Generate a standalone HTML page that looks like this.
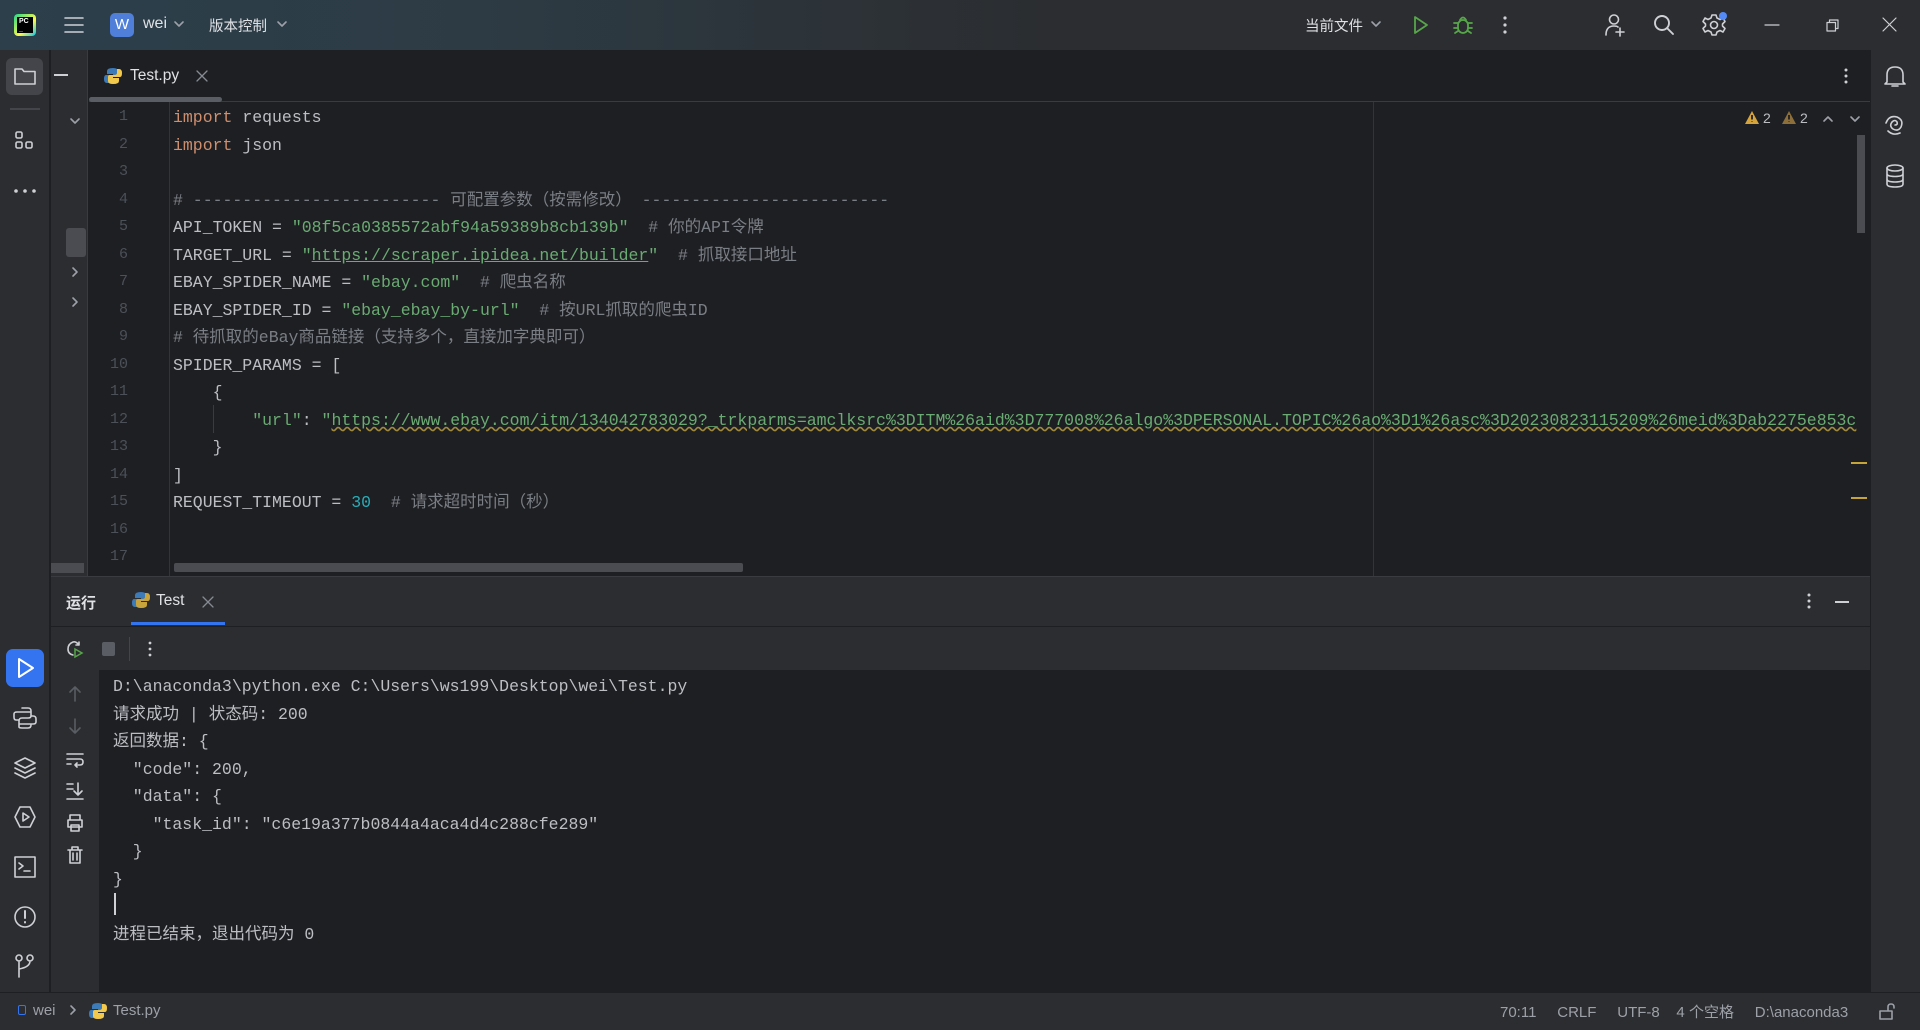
<!DOCTYPE html>
<html><head><meta charset="utf-8"><style>
*{margin:0;padding:0;box-sizing:border-box}
body{width:1920px;height:1030px;overflow:hidden;background:#1e1f22;font-family:"Liberation Sans","Noto Sans CJK SC",sans-serif;color:#bcbec4;position:relative}
.a{position:absolute}
.mono{font-family:"Liberation Mono","Noto Sans CJK SC",monospace;font-size:16.5px;white-space:pre;line-height:20px}
.k{color:#cf8e6d}.s{color:#6aab73}.c{color:#7a7e85}.n{color:#2aacb8}.u{text-decoration:underline}
.ln{position:absolute;width:40px;text-align:right;left:88px;color:#4b5059;font-family:"Liberation Mono",monospace;font-size:15px}
svg{position:absolute;overflow:visible}
.ic{fill:none;stroke:#ced0d6;stroke-width:1.6;stroke-linecap:round;stroke-linejoin:round}
</style></head><body>
<!-- title bar -->
<div class="a" style="left:0;top:0;width:1920px;height:50px;background:linear-gradient(90deg,#2c3f4b 0%,#2d3b44 25%,#2b2d30 55%)"></div>
<div class="a" style="left:14px;top:14px;width:22px;height:22px;border-radius:4px;background:linear-gradient(135deg,#21d789,#fcf84a 60%,#07c3f2)"></div>
<div class="a" style="left:17px;top:17px;width:16px;height:16px;background:#000;color:#fff;font-size:7px;font-weight:bold;padding:1px 2px;line-height:8px">PC<br>_</div>
<svg style="left:64px;top:16px" width="20" height="18"><path class="ic" d="M1 2H19M1 9H19M1 16H19"/></svg>
<div class="a" style="left:110px;top:13px;width:24px;height:24px;border-radius:5px;background:#4f7fd9;color:#fff;font-size:15px;text-align:center;line-height:24px">W</div>
<div class="a" style="left:143px;top:15px;font-size:16px;color:#dfe1e5">wei</div>
<svg style="left:174px;top:21px" width="10" height="6"><path class="ic" d="M1 1L5 5L9 1" style="stroke:#9da0a8"/></svg>
<div class="a" style="left:209px;top:15px;font-size:14.5px;color:#dfe1e5">版本控制</div>
<svg style="left:277px;top:21px" width="10" height="6"><path class="ic" d="M1 1L5 5L9 1" style="stroke:#9da0a8"/></svg>
<div class="a" style="left:1305px;top:15px;font-size:14.5px;color:#dfe1e5">当前文件</div>
<svg style="left:1371px;top:21px" width="10" height="6"><path class="ic" d="M1 1L5 5L9 1" style="stroke:#9da0a8"/></svg>
<svg style="left:1413px;top:15px" width="16" height="20"><path class="ic" d="M2 2L14 10L2 18Z" style="stroke:#57a64a;stroke-width:1.8"/></svg>
<svg style="left:1453px;top:14px" width="20" height="22"><g class="ic" style="stroke:#57a64a;stroke-width:1.8"><rect x="5" y="6" width="10" height="13" rx="5"/><path d="M7 6Q10 1 13 6M1 9H5M15 9H19M1 14H5M15 14H19M2 19L5 17M18 19L15 17"/></g></svg>
<svg style="left:1502px;top:16px" width="6" height="18"><g fill="#ced0d6"><circle cx="3" cy="2" r="1.6"/><circle cx="3" cy="9" r="1.6"/><circle cx="3" cy="16" r="1.6"/></g></svg>
<svg style="left:1604px;top:13px" width="22" height="24"><path class="ic" d="M10 2a4.5 4.5 0 1 1 0 9a4.5 4.5 0 1 1 0-9M2 22Q2 13 10 13Q13 13 14 14M16 15V23M12 19H20"/></svg>
<svg style="left:1653px;top:14px" width="22" height="22"><path class="ic" d="M9 2a7 7 0 1 1 0 14a7 7 0 1 1 0-14M14 14L20 20" style="stroke-width:1.9"/></svg>
<svg style="left:1702px;top:13px" width="24" height="24"><path class="ic" d="M10 2H14L15 5L18 6.5L21 5L23 8.5L20.5 11V13L23 15.5L21 19L18 17.5L15 19L14 22H10L9 19L6 17.5L3 19L1 15.5L3.5 13V11L1 8.5L3 5L6 6.5L9 5Z"/><circle class="ic" cx="12" cy="12" r="3.5"/><circle cx="21" cy="3" r="4" fill="#548af7"/></svg>
<svg style="left:1765px;top:24px" width="14" height="2"><path class="ic" d="M0 1H14" style="stroke-width:1.2"/></svg>
<svg style="left:1826px;top:19px" width="13" height="13"><path class="ic" d="M1 3.5H9.5V12H1ZM3.5 3.5V1H12V9.5H9.5" style="stroke-width:1.2"/></svg>
<svg style="left:1883px;top:18px" width="13" height="13"><path class="ic" d="M0 0L13 13M13 0L0 13" style="stroke-width:1.2"/></svg>

<!-- left stripe -->
<div class="a" style="left:0;top:50px;width:50px;height:942px;background:#2b2d30;border-right:1px solid #1e1f22"></div>
<div class="a" style="left:6px;top:58px;width:37px;height:37px;border-radius:6px;background:#43454a"></div>
<svg style="left:14px;top:67px" width="22" height="18"><path class="ic" d="M1 2H8L10 4.5H21V17H1Z"/></svg>
<div class="a" style="left:10px;top:108px;width:30px;height:2px;background:#43454a"></div>
<svg style="left:15px;top:131px" width="20" height="20"><g class="ic"><rect x="1" y="1" width="6" height="6" rx="1.5"/><rect x="1" y="11" width="6" height="6" rx="1.5"/><rect x="11" y="11" width="6" height="6" rx="1.5"/></g></svg>
<svg style="left:14px;top:189px" width="22" height="4"><g fill="#ced0d6"><circle cx="2" cy="2" r="1.8"/><circle cx="11" cy="2" r="1.8"/><circle cx="20" cy="2" r="1.8"/></g></svg>
<div class="a" style="left:6px;top:649px;width:38px;height:38px;border-radius:7px;background:#3574f0"></div>
<svg style="left:17px;top:657px" width="18" height="22"><path class="ic" d="M2 2L16 11L2 20Z" style="stroke:#fff;stroke-width:2"/></svg>
<svg style="left:13px;top:706px" width="24" height="24"><path class="ic" d="M9 2H15Q18 2 18 5V10Q18 12 15 12H9Q6 12 6 15V21Q6 22 9 22H15Q18 22 18 19M6 14H3Q1 14 1 11V8Q1 6 4 6H18M18 10H20Q23 10 23 13V16Q23 18 20 18H6"/></svg>
<svg style="left:13px;top:756px" width="24" height="24"><path class="ic" d="M12 2L22 7L12 12L2 7ZM2 12L12 17L22 12M2 17L12 22L22 17"/></svg>
<svg style="left:13px;top:805px" width="24" height="24"><path class="ic" d="M7 2H17L22 12L17 22H7L2 12ZM10 8L16 12L10 16Z"/></svg>
<svg style="left:13px;top:855px" width="24" height="24"><path class="ic" d="M2 2H22V22H2ZM6 8L10 11L6 14M11 16H17"/></svg>
<svg style="left:13px;top:905px" width="24" height="24"><circle class="ic" cx="12" cy="12" r="10"/><path class="ic" d="M12 6V13M12 17V17.5" style="stroke-width:2"/></svg>
<svg style="left:14px;top:954px" width="22" height="24"><path class="ic" d="M5 1a3 3 0 1 1 0 6a3 3 0 1 1 0-6M16 1a3 3 0 1 1 0 6a3 3 0 1 1 0-6M5 7V23M16 7Q16 13 5 15"/></svg>

<!-- project collapsed stripe -->
<div class="a" style="left:51px;top:50px;width:37px;height:526px;background:#2b2d30;border-right:1px solid #393b40"></div>
<div class="a" style="left:54px;top:74px;width:14px;height:2px;background:#ced0d6"></div>
<svg style="left:70px;top:118px" width="10" height="6"><path class="ic" d="M1 1L5 5L9 1" style="stroke:#9da0a8"/></svg>
<div class="a" style="left:66px;top:228px;width:20px;height:29px;background:#4a4c51;border-radius:3px"></div>
<svg style="left:72px;top:267px" width="6" height="10"><path class="ic" d="M1 1L5 5L1 9" style="stroke:#9da0a8"/></svg>
<svg style="left:72px;top:297px" width="6" height="10"><path class="ic" d="M1 1L5 5L1 9" style="stroke:#9da0a8"/></svg>
<div class="a" style="left:51px;top:563px;width:33px;height:10px;background:#4a4c51"></div>

<!-- editor tabs -->
<div class="a" style="left:89px;top:101px;width:1781px;height:1px;background:#393b40"></div>
<div class="a" style="left:89px;top:97px;width:133px;height:5px;background:#5a5d63;border-radius:3px"></div>
<svg style="left:104px;top:67px" width="18" height="18"><path d="M9 1Q3 1 3 4V7H9V8H2Q0 8 0 12Q0 16 3 16H5V12Q5 10 8 10H12Q14 10 14 8V4Q14 1 9 1Z" fill="#3d7ab8"/><path d="M9 17Q15 17 15 14V11H9V10H16Q18 10 18 6Q18 2 15 2H13V6Q13 8 10 8H6Q4 8 4 10V14Q4 17 9 17Z" fill="#f2c94c"/></svg>
<div class="a" style="left:130px;top:67px;font-size:15.5px;color:#dfe1e5">Test.py</div>
<svg style="left:197px;top:71px" width="10" height="10"><path class="ic" d="M0 0L10 10M10 0L0 10" style="stroke:#868a91;stroke-width:1.3"/></svg>
<svg style="left:1843px;top:68px" width="6" height="16"><g fill="#ced0d6"><circle cx="3" cy="2" r="1.5"/><circle cx="3" cy="8" r="1.5"/><circle cx="3" cy="14" r="1.5"/></g></svg>

<!-- editor code -->
<div class="a" style="left:169px;top:102px;width:1px;height:474px;background:#313438"></div>
<div class="a" style="left:1373px;top:102px;width:1px;height:474px;background:#313438"></div>
<div class="a" style="left:213px;top:405px;width:1px;height:28px;background:#393b40"></div>
<div class="a" style="left:0;top:1px">
<div class="ln" style="top:107px">1</div><div class="ln" style="top:135px">2</div><div class="ln" style="top:162px">3</div><div class="ln" style="top:190px">4</div><div class="ln" style="top:217px">5</div><div class="ln" style="top:245px">6</div><div class="ln" style="top:272px">7</div><div class="ln" style="top:300px">8</div><div class="ln" style="top:327px">9</div><div class="ln" style="top:355px">10</div><div class="ln" style="top:382px">11</div><div class="ln" style="top:410px">12</div><div class="ln" style="top:437px">13</div><div class="ln" style="top:465px">14</div><div class="ln" style="top:492px">15</div><div class="ln" style="top:520px">16</div><div class="ln" style="top:547px">17</div>
</div>
<div class="a" style="left:173px;top:1px;width:1697px;height:575px;overflow:hidden">
<div class="a mono" style="top:107px"><span class="k">import</span> requests</div>
<div class="a mono" style="top:135px"><span class="k">import</span> json</div>
<div class="a mono c" style="top:190px"># ------------------------- 可配置参数（按需修改） -------------------------</div>
<div class="a mono" style="top:217px">API_TOKEN = <span class="s">"08f5ca0385572abf94a59389b8cb139b"</span>  <span class="c"># 你的API令牌</span></div>
<div class="a mono" style="top:245px">TARGET_URL = <span class="s">"<span class="u">https://scraper.ipidea.net/builder</span>"</span>  <span class="c"># 抓取接口地址</span></div>
<div class="a mono" style="top:272px">EBAY_SPIDER_NAME = <span class="s">"ebay.com"</span>  <span class="c"># 爬虫名称</span></div>
<div class="a mono" style="top:300px">EBAY_SPIDER_ID = <span class="s">"ebay_ebay_by-url"</span>  <span class="c"># 按URL抓取的爬虫ID</span></div>
<div class="a mono c" style="top:327px"># 待抓取的eBay商品链接（支持多个，直接加字典即可）</div>
<div class="a mono" style="top:355px">SPIDER_PARAMS = [</div>
<div class="a mono" style="top:382px">    {</div>
<div class="a mono" style="top:410px">        <span class="s">"url"</span>: <span class="s">"<span style="text-decoration:underline wavy #a08a3c">https://www.ebay.com/itm/134042783029?_trkparms=amclksrc%3DITM%26aid%3D777008%26algo%3DPERSONAL.TOPIC%26ao%3D1%26asc%3D20230823115209%26meid%3Dab2275e853c</span></span></div>
<div class="a mono" style="top:437px">    }</div>
<div class="a mono" style="top:465px">]</div>
<div class="a mono" style="top:492px">REQUEST_TIMEOUT = <span class="n">30</span>  <span class="c"># 请求超时时间（秒）</span></div>
</div>
<div class="a" style="left:174px;top:563px;width:569px;height:9px;background:#4a4c51;border-radius:2px"></div>
<div class="a" style="left:1857px;top:135px;width:8px;height:98px;background:#4a4c51"></div>
<div class="a" style="left:1851px;top:462px;width:16px;height:2px;background:#c7a43a"></div>
<div class="a" style="left:1851px;top:497px;width:16px;height:2px;background:#c7a43a"></div>
<svg style="left:1745px;top:111px" width="14" height="13"><path d="M7 0L14 13H0Z" fill="#d6a43c"/><path d="M7 4V8.5M7 10.5V11" stroke="#1e1f22" stroke-width="1.8"/></svg>
<div class="a" style="left:1763px;top:110px;font-size:14px;color:#bcbec4">2</div>
<svg style="left:1782px;top:111px" width="14" height="13"><path d="M7 0L14 13H0Z" fill="#8c6f3a"/><path d="M7 4V8.5M7 10.5V11" stroke="#1e1f22" stroke-width="1.8"/></svg>
<div class="a" style="left:1800px;top:110px;font-size:14px;color:#bcbec4">2</div>
<svg style="left:1823px;top:116px" width="10" height="6"><path class="ic" d="M1 5L5 1L9 5" style="stroke:#9da0a8"/></svg>
<svg style="left:1850px;top:116px" width="10" height="6"><path class="ic" d="M1 1L5 5L9 1" style="stroke:#9da0a8"/></svg>

<!-- right stripe -->
<div class="a" style="left:1870px;top:50px;width:50px;height:942px;background:#2b2d30;border-left:1px solid #1e1f22"></div>
<svg style="left:1884px;top:64px" width="22" height="24"><path class="ic" d="M3 18V11Q3 3 11 3Q19 3 19 11V18L21 20H1ZM8 22H14"/></svg>
<svg style="left:1884px;top:114px" width="22" height="22"><path class="ic" d="M11 11Q14 11 13 8Q11 5 8 8Q5 12 9 15Q14 18 17 13Q20 6 13 3Q5 1 2 9M4 17Q9 22 16 19"/></svg>
<svg style="left:1885px;top:164px" width="20" height="24"><g class="ic"><ellipse cx="10" cy="4" rx="8" ry="3"/><path d="M2 4V20Q2 23 10 23Q18 23 18 20V4M2 9.5Q2 12.5 10 12.5Q18 12.5 18 9.5M2 15Q2 18 10 18Q18 18 18 15"/></g></svg>

<!-- bottom panel -->
<div class="a" style="left:51px;top:576px;width:1819px;height:416px;background:#2b2d30;border-top:1px solid #393b40"></div>
<div class="a" style="left:51px;top:626px;width:1819px;height:1px;background:#1e1f22"></div>
<div class="a" style="left:66px;top:592px;font-size:15px;color:#dfe1e5;font-weight:bold">运行</div>
<svg style="left:132px;top:591px" width="18" height="18"><path d="M9 1Q3 1 3 4V7H9V8H2Q0 8 0 12Q0 16 3 16H5V12Q5 10 8 10H12Q14 10 14 8V4Q14 1 9 1Z" fill="#3d7ab8"/><path d="M9 17Q15 17 15 14V11H9V10H16Q18 10 18 6Q18 2 15 2H13V6Q13 8 10 8H6Q4 8 4 10V14Q4 17 9 17Z" fill="#c9a43c"/></svg>
<div class="a" style="left:156px;top:592px;font-size:15.5px;color:#dfe1e5">Test</div>
<svg style="left:203px;top:597px" width="10" height="10"><path class="ic" d="M0 0L10 10M10 0L0 10" style="stroke:#868a91;stroke-width:1.3"/></svg>
<div class="a" style="left:131px;top:622px;width:94px;height:3px;background:#3574f0"></div>
<svg style="left:1806px;top:593px" width="6" height="16"><g fill="#ced0d6"><circle cx="3" cy="2" r="1.5"/><circle cx="3" cy="8" r="1.5"/><circle cx="3" cy="14" r="1.5"/></g></svg>
<div class="a" style="left:1835px;top:601px;width:14px;height:1.5px;background:#ced0d6"></div>
<svg style="left:66px;top:640px" width="18" height="18"><path class="ic" d="M13 2V5H10M13 5Q10 1 7 2Q2 4 2 9Q2 14 7 15"/><path d="M9 9L16 13L9 17Z" fill="none" stroke="#57a64a" stroke-width="1.5"/></svg>
<div class="a" style="left:102px;top:642px;width:13px;height:14px;background:#5a5d63;border-radius:2px"></div>
<div class="a" style="left:129px;top:637px;width:1px;height:24px;background:#43454a"></div>
<svg style="left:147px;top:641px" width="6" height="16"><g fill="#ced0d6"><circle cx="3" cy="2" r="1.4"/><circle cx="3" cy="8" r="1.4"/><circle cx="3" cy="14" r="1.4"/></g></svg>
<div class="a" style="left:99px;top:670px;width:1771px;height:322px;background:#1e1f22"></div>
<svg style="left:69px;top:686px" width="12" height="16"><path class="ic" d="M6 15V1M1 6L6 1L11 6" style="stroke:#5a5d63"/></svg>
<svg style="left:69px;top:718px" width="12" height="16"><path class="ic" d="M6 1V15M1 10L6 15L11 10" style="stroke:#5a5d63"/></svg>
<svg style="left:66px;top:752px" width="18" height="16"><path class="ic" d="M1 2H17M1 7H14Q17 7 17 10Q17 13 14 13H9M11 11L9 13L11 15M1 12H5"/></svg>
<svg style="left:66px;top:782px" width="18" height="18"><path class="ic" d="M1 2H7M1 7H7M1 17H17M12 1V13M8 9L12 13L16 9"/></svg>
<svg style="left:66px;top:814px" width="18" height="18"><path class="ic" d="M4 6V1H14V6M2 6H16V13H2ZM5 11H13V17H5Z"/></svg>
<svg style="left:67px;top:846px" width="16" height="18"><path class="ic" d="M1 4H15M5 4V1H11V4M3 4V17H13V4M6 7V14M10 7V14"/></svg>
<div class="a mono" style="left:113px;top:673px;line-height:27.5px;color:#bcbec4">D:\anaconda3\python.exe C:\Users\ws199\Desktop\wei\Test.py
请求成功 | 状态码: 200
返回数据: {
  "code": 200,
  "data": {
    "task_id": "c6e19a377b0844a4aca4d4c288cfe289"
  }
}

进程已结束，退出代码为 0</div>
<div class="a" style="left:114px;top:893px;width:1.5px;height:22px;background:#ced0d6"></div>

<!-- status bar -->
<div class="a" style="left:0;top:992px;width:1920px;height:38px;background:#2b2d30;border-top:1px solid #1e1f22"></div>
<div class="a" style="left:18px;top:1005px;width:8px;height:10px;border:1.5px solid #3574f0;border-radius:2px"></div>
<div class="a" style="left:33px;top:1002px;font-size:15px;color:#9da0a8">wei</div>
<svg style="left:70px;top:1005px" width="6" height="10"><path class="ic" d="M1 1L5 5L1 9" style="stroke:#9da0a8"/></svg>
<svg style="left:89px;top:1002px" width="18" height="18"><path d="M9 1Q3 1 3 4V7H9V8H2Q0 8 0 12Q0 16 3 16H5V12Q5 10 8 10H12Q14 10 14 8V4Q14 1 9 1Z" fill="#3d7ab8"/><path d="M9 17Q15 17 15 14V11H9V10H16Q18 10 18 6Q18 2 15 2H13V6Q13 8 10 8H6Q4 8 4 10V14Q4 17 9 17Z" fill="#f2c94c"/></svg>
<div class="a" style="left:113px;top:1002px;font-size:15px;color:#9da0a8">Test.py</div>
<div class="a" style="left:1500px;top:1001px;font-size:15px;color:#9da0a8;white-space:pre">70:11     CRLF     UTF-8    4 个空格     D:\anaconda3</div>
<svg style="left:1879px;top:1003px" width="18" height="17"><path class="ic" d="M1 8H13V16H1ZM9 8V4Q9 1 12 1Q15 1 15 4V5" style="stroke:#9da0a8"/></svg>
</body></html>
